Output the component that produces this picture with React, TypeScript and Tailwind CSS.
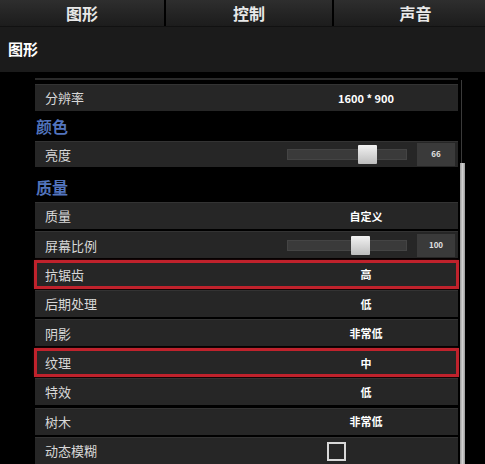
import React from "react";

const font = { fontFamily: '"Noto Sans CJK SC", "Noto Sans", sans-serif' };

function Row({ label, value, highlight }: { label: string; value: string; highlight?: boolean }) {
  return (
    <div
      className={
        "flex items-center h-[27px] bg-[#262626] border-t border-[#333] " +
        (highlight ? "outline-[3px] outline outline-[#c0222c] -outline-offset-[2px] shadow-[0_0_3px_#7a1418]" : "")
      }
    >
      <div className="flex-1 pl-[10px] text-[13px] text-[#d8d8d8]">{label}</div>
      <div className="w-[100px] text-center text-[11px] font-bold text-white mr-[42px]">{value}</div>
    </div>
  );
}

function SliderRow({ label, pos, value }: { label: string; pos: number; value: string }) {
  return (
    <div className="flex items-center h-[27px] bg-[#262626] border-t border-[#333]">
      <div className="flex-1 pl-[10px] text-[13px] text-[#d8d8d8]">{label}</div>
      <div className="relative w-[120px] h-[11px] bg-[#3a3a3a] border border-[#444]">
        <div
          className="absolute top-[-5px] w-[19px] h-[19px] bg-gradient-to-b from-[#f2f2f2] to-[#bdbdbd] rounded-[1px]"
          style={{ left: pos }}
        />
      </div>
      <div className="ml-[10px] mr-[3px] w-[38px] h-[23px] bg-[#3a3a3a] flex items-center justify-center text-[8px] font-bold text-[#e0e0e0]">
        {value}
      </div>
    </div>
  );
}

function Heading({ text }: { text: string }) {
  return (
    <div className="h-[30px] flex items-center pl-[1px] text-[16px] font-bold text-[#5274bd]">{text}</div>
  );
}

export default function App() {
  return (
    <div className="w-[485px] h-[464px] bg-black overflow-hidden flex flex-col" style={font}>
      <div className="h-[26px] grid grid-cols-[166px_168px_1fr] bg-gradient-to-b from-[#2e2e2e] to-[#1c1c1c] shrink-0">
        <div className="flex items-center justify-center text-[16px] font-bold text-[#e8e8e8] border-r-2 border-black">图形</div>
        <div className="flex items-center justify-center text-[16px] font-bold text-[#e8e8e8] border-r-2 border-black">控制</div>
        <div className="flex items-center justify-center pl-[12px] text-[16px] font-bold text-[#e8e8e8]">声音</div>
      </div>
      <div className="h-[46px] bg-[#1b1b1b] flex items-center pl-[8px] text-[15px] font-bold text-white shrink-0 border-t border-[#111]">
        图形
      </div>
      <div className="flex flex-1 min-h-0">
        <div className="ml-[35px] w-[423px] flex flex-col">
          <div className="mt-[6px] h-[2px] bg-[#2a2a2a]" />
          <div className="mt-[4px]">
            <Row label="分辨率" value="1600 * 900" />
          </div>
          <Heading text="颜色" />
          <SliderRow label="亮度" pos={70} value="66" />
          <div className="h-[5px]" />
          <Heading text="质量" />
          <div className="flex flex-col gap-[2.4px]">
            <Row label="质量" value="自定义" />
            <SliderRow label="屏幕比例" pos={63} value="100" />
            <Row label="抗锯齿" value="高" highlight />
            <Row label="后期处理" value="低" />
            <Row label="阴影" value="非常低" />
            <Row label="纹理" value="中" highlight />
            <Row label="特效" value="低" />
            <Row label="树木" value="非常低" />
            <div className="flex items-center h-[27px] bg-[#262626] border-t border-[#333]">
              <div className="flex-1 pl-[10px] text-[13px] text-[#d8d8d8]">动态模糊</div>
              <div className="w-[19px] h-[19px] border-2 border-[#d8d8d8] mr-[112px]" />
            </div>
          </div>
        </div>
        <div className="relative ml-[2px] w-[5px]">
          <div className="absolute left-[1px] top-[8px] bottom-0 w-[1px] bg-[#3a3a3a]" />
          <div className="absolute left-0 top-[91px] bottom-0 w-[5px] bg-gradient-to-r from-[#9a9a9a] via-[#d0d0d0] to-[#9a9a9a]" />
        </div>
      </div>
    </div>
  );
}
